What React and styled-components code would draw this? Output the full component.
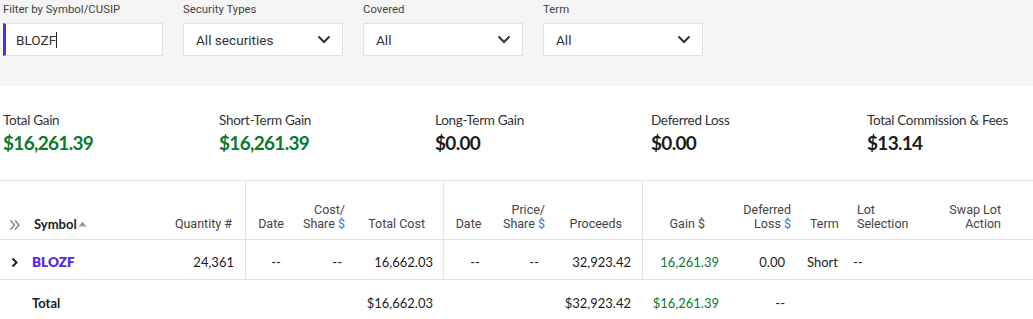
import React from "react";
import styled, { createGlobalStyle } from "styled-components";

const Global = createGlobalStyle`
  html, body { margin: 0; padding: 0; background: #fff; }
  body { font-family: "Lato", "Liberation Sans", sans-serif; color: #222; }
  * { box-sizing: border-box; }
`;

const Page = styled.div`
  width: 1033px;
`;

const FilterBar = styled.div`
  background: #f5f5f5;
  height: 86px;
  padding: 2px 0 0 3px;
  display: flex;
  gap: 20px;
`;

const Field = styled.div`
  display: flex;
  flex-direction: column;
  gap: 7px;
  width: 160px;
`;

const FieldLabel = styled.label`
  font-family: "Roboto", sans-serif;
  font-size: 11.4px;
  line-height: 14px;
  color: #444;
`;

const InputBox = styled.div`
  height: 33px;
  background: #fff;
  border: 1px solid #e2e2e2;
  border-left: ${(p) => (p.$active ? "3px solid #5b2be0" : "1px solid #e2e2e2")};
  display: flex;
  align-items: center;
  justify-content: space-between;
  padding: 0 ${(p) => (p.$active ? "10px" : "11px")} 0 ${(p) => (p.$active ? "10px" : "12px")};
  font-family: "Roboto", sans-serif;
  font-size: 13.6px;
  color: #333;
`;

const Typed = styled.span`
  display: flex;
  align-items: center;
`;

const Caret = styled.span`
  display: inline-block;
  width: 1px;
  height: 16px;
  background: #222;
`;

const Chevron = () => (
  <svg width="14" height="9" viewBox="0 0 14 9">
    <path d="M1.5 1.5 L7 7 L12.5 1.5" fill="none" stroke="#333" strokeWidth="2" />
  </svg>
);

const Summary = styled.div`
  height: 94px;
  display: grid;
  grid-template-columns: repeat(5, 216px);
  padding: 25px 0 0 3px;
`;

const Stat = styled.div`
  display: flex;
  flex-direction: column;
  gap: 2px;
`;

const StatLabel = styled.div`
  font-size: 13.5px;
  letter-spacing: -0.3px;
  line-height: 18px;
  color: #333;
`;

const StatValue = styled.div`
  font-size: 19px;
  letter-spacing: -0.7px;
  line-height: 24px;
  font-weight: 700;
  color: ${(p) => (p.$green ? "#0b7a2c" : "#1c1c1c")};
`;

const cols = "28px 132px 85px 55px 55px 88px 57px 55px 87px 78px 75px 50px 70px 1fr";

const Row = styled.div`
  display: grid;
  grid-template-columns: ${cols};
  height: ${(p) => p.$h}px;
  border-top: ${(p) => (p.$top ? "1px solid #e4e4e4" : "none")};
  border-bottom: ${(p) => (p.$bottom ? "1px solid #e4e4e4" : "none")};
`;

const justify = (a) => (a === "left" ? "flex-start" : a === "center" ? "center" : "flex-end");

const HeadCell = styled.div`
  font-family: "Roboto", sans-serif;
  font-size: 12.5px;
  line-height: 14px;
  color: #444;
  display: flex;
  align-items: flex-end;
  justify-content: ${(p) => justify(p.$align)};
  text-align: ${(p) => p.$align || "right"};
  padding: 0 ${(p) => p.$pr ?? 8}px 8px ${(p) => p.$pl ?? 0}px;
  border-left: ${(p) => (p.$div ? "1px solid #e4e4e4" : "none")};
`;

const SymbolHead = styled.span`
  font-family: "Lato", sans-serif;
  font-weight: 700;
  font-size: 13px;
  color: #222;
  display: inline-flex;
  align-items: center;
  gap: 1px;
`;

const SortArrow = () => (
  <svg width="9" height="6" viewBox="0 0 9 6">
    <path d="M0.5 5.5 L4.5 0.8 L8.5 5.5 Z" fill="#9a9a9a" />
  </svg>
);

const Cell = styled.div`
  font-size: 13px;
  color: ${(p) => (p.$green ? "#0b7a2c" : "#1c1c1c")};
  font-weight: ${(p) => (p.$bold ? 700 : 400)};
  display: flex;
  align-items: center;
  justify-content: ${(p) => justify(p.$align)};
  padding: 5px ${(p) => p.$pr ?? 8}px 0 ${(p) => p.$pl ?? 0}px;
  border-left: ${(p) => (p.$div ? "1px solid #e4e4e4" : "none")};
`;

const SymbolLink = styled.span`
  color: #5b2be0;
  font-weight: 800;
  font-size: 13.5px;
`;

const Dollar = styled.span`
  color: #3a6fd8;
`;

const ExpandIcon = () => (
  <svg width="12" height="12" viewBox="0 0 12 12">
    <path d="M1.5 1.5 L5.5 6 L1.5 10.5 M6 1.5 L10 6 L6 10.5" fill="none" stroke="#777" strokeWidth="1.2" />
  </svg>
);

const RowChevron = () => (
  <svg width="8" height="11" viewBox="0 0 8 11">
    <path d="M1.5 1.5 L5.5 5.5 L1.5 9.5" fill="none" stroke="#222" strokeWidth="2" />
  </svg>
);

const TwoLine = ({ a, b, dollar }) => (
  <span>
    {a}
    <br />
    {b}
    {dollar && <Dollar> $</Dollar>}
  </span>
);

const filters = [
  ["Security Types", "All securities"],
  ["Covered", "All"],
  ["Term", "All"],
];

const stats = [
  ["Total Gain", "$16,261.39", true],
  ["Short-Term Gain", "$16,261.39", true],
  ["Long-Term Gain", "$0.00", false],
  ["Deferred Loss", "$0.00", false],
  ["Total Commission & Fees", "$13.14", false],
];

export default function App() {
  return (
    <Page>
      <Global />
      <FilterBar>
        <Field>
          <FieldLabel>Filter by Symbol/CUSIP</FieldLabel>
          <InputBox $active>
            <Typed>
              BLOZF<Caret />
            </Typed>
          </InputBox>
        </Field>
        {filters.map(([l, v]) => (
          <Field key={l}>
            <FieldLabel>{l}</FieldLabel>
            <InputBox>
              <span>{v}</span>
              <Chevron />
            </InputBox>
          </Field>
        ))}
      </FilterBar>

      <Summary>
        {stats.map(([l, v, g]) => (
          <Stat key={l}>
            <StatLabel>{l}</StatLabel>
            <StatValue $green={g}>{v}</StatValue>
          </Stat>
        ))}
      </Summary>

      <Row $h={60} $top $bottom>
        <HeadCell $align="left" $pl={9} $pr={0}>
          <ExpandIcon />
        </HeadCell>
        <HeadCell $align="left" $pl={6}>
          <SymbolHead>
            Symbol
            <SortArrow />
          </SymbolHead>
        </HeadCell>
        <HeadCell $pr={13}>Quantity #</HeadCell>
        <HeadCell $div $align="center" $pr={4}>Date</HeadCell>
        <HeadCell $pr={10}>
          <TwoLine a="Cost/" b="Share" dollar />
        </HeadCell>
        <HeadCell $pr={18}>Total Cost</HeadCell>
        <HeadCell $div $align="center" $pr={7}>Date</HeadCell>
        <HeadCell $pr={10}>
          <TwoLine a="Price/" b="Share" dollar />
        </HeadCell>
        <HeadCell $pr={20}>Proceeds</HeadCell>
        <HeadCell $div $pr={15}>Gain $</HeadCell>
        <HeadCell $pr={4}>
          <TwoLine a="Deferred" b="Loss" dollar />
        </HeadCell>
        <HeadCell $align="left" $pl={15}>Term</HeadCell>
        <HeadCell $align="left" $pl={12}>
          <TwoLine a="Lot" b="Selection" />
        </HeadCell>
        <HeadCell $pr={32}>
          <TwoLine a="Swap Lot" b="Action" />
        </HeadCell>
      </Row>

      <Row $h={40} $bottom>
        <Cell $align="left" $pl={11} $pr={0}>
          <RowChevron />
        </Cell>
        <Cell $align="left" $pl={4}>
          <SymbolLink>BLOZF</SymbolLink>
        </Cell>
        <Cell $pr={11}>24,361</Cell>
        <Cell $div $align="center" $pl={6} $pr={0}>--</Cell>
        <Cell $pr={13}>--</Cell>
        <Cell $pr={10}>16,662.03</Cell>
        <Cell $div $align="center" $pl={6} $pr={0}>--</Cell>
        <Cell $pr={16}>--</Cell>
        <Cell $pr={11}>32,923.42</Cell>
        <Cell $div $green $pr={1}>16,261.39</Cell>
        <Cell $pr={10}>0.00</Cell>
        <Cell $align="left" $pl={12}>Short</Cell>
        <Cell $align="left" $pl={8}>--</Cell>
        <Cell />
      </Row>

      <Row $h={40}>
        <Cell />
        <Cell $align="left" $pl={4} $bold>Total</Cell>
        <Cell />
        <Cell />
        <Cell />
        <Cell $pr={10}>$16,662.03</Cell>
        <Cell />
        <Cell />
        <Cell $pr={11}>$32,923.42</Cell>
        <Cell $green $pr={1}>$16,261.39</Cell>
        <Cell $pr={10}>--</Cell>
        <Cell />
        <Cell />
        <Cell />
      </Row>
    </Page>
  );
}
